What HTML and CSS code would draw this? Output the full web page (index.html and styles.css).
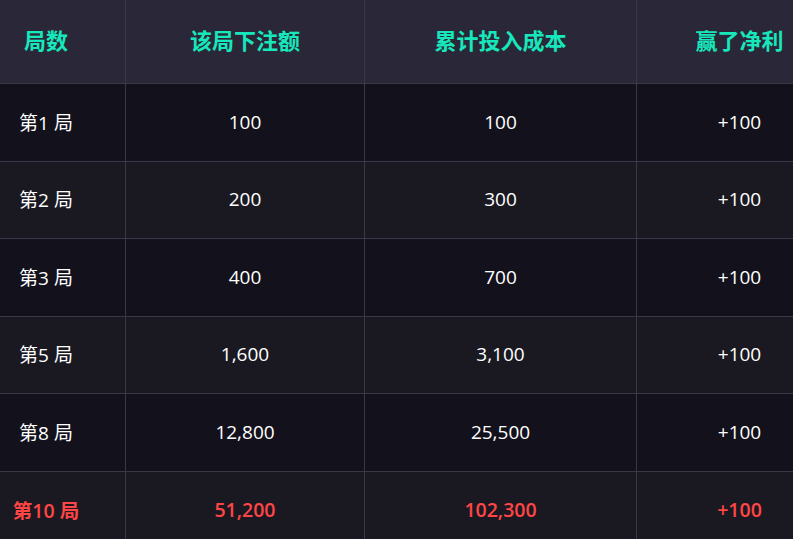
FILE: index.html
```html
<!DOCTYPE html>
<html lang="zh">
<head>
<meta charset="utf-8">
<link rel="stylesheet" href="styles.css">
</head>
<body>
<div class="viewport">
<div class="table">
  <div class="row head">
    <div class="cell first">局数</div>
    <div class="cell">该局下注额</div>
    <div class="cell">累计投入成本</div>
    <div class="cell">赢了净利</div>
  </div>
  <div class="row odd">
    <div class="cell first">第1 局</div><div class="cell">100</div><div class="cell">100</div><div class="cell">+100</div>
  </div>
  <div class="row even">
    <div class="cell first">第2 局</div><div class="cell">200</div><div class="cell">300</div><div class="cell">+100</div>
  </div>
  <div class="row odd">
    <div class="cell first">第3 局</div><div class="cell">400</div><div class="cell">700</div><div class="cell">+100</div>
  </div>
  <div class="row even">
    <div class="cell first">第5 局</div><div class="cell">1,600</div><div class="cell">3,100</div><div class="cell">+100</div>
  </div>
  <div class="row odd">
    <div class="cell first">第8 局</div><div class="cell">12,800</div><div class="cell">25,500</div><div class="cell">+100</div>
  </div>
  <div class="row even hot">
    <div class="cell first">第10 局</div><div class="cell">51,200</div><div class="cell">102,300</div><div class="cell">+100</div>
  </div>
</div>
</div>
</body>
</html>
```
FILE: styles.css
```css
html, body {
  margin: 0;
  padding: 0;
  background: #1a1921;
}
body {
  font-family: "Open Sans", "Noto Sans CJK SC", sans-serif;
  color: #ffffff;
}
.viewport {
  width: 793px;
  height: 539px;
  overflow: hidden;
}
.table {
  width: 842px;
}
.row {
  display: grid;
  grid-template-columns: 125px 239px 272px 206px;
  height: 76.5px;
  border-bottom: 1px solid #393846;
}
.row.head {
  height: 83px;
  background: #2a2739;
}
.row.odd { background: #13121c; }
.row.even { background: #1a1921; }
.cell {
  display: flex;
  align-items: center;
  justify-content: center;
  border-left: 1px solid #393846;
  font-size: 19px;
  padding-bottom: 1px;
  box-sizing: border-box;
}
.cell:first-child { border-left: none; }
.cell.first {
  padding-right: 33px;
}
.head .cell {
  color: #17e8bc;
  font-size: 22px;
  font-weight: 700;
  padding-bottom: 5px;
}
.hot .cell {
  color: #ff4545;
  font-weight: 600;
  font-size: 19.5px;
  padding-bottom: 0;
}
```
